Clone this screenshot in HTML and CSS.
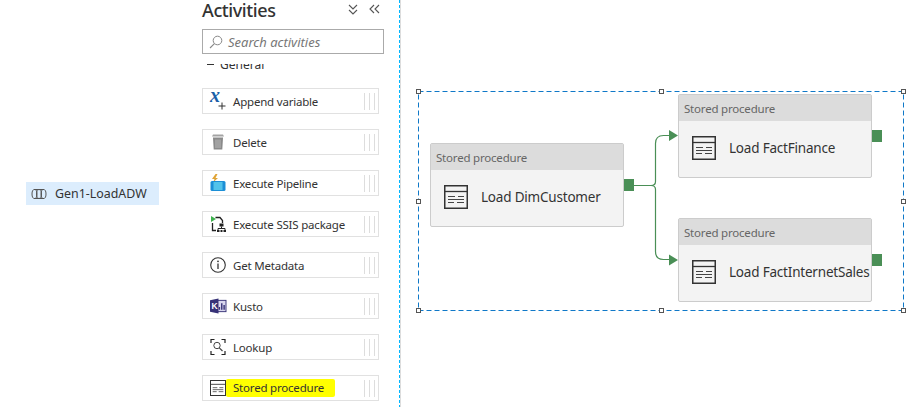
FILE: index.html
```html
<!DOCTYPE html>
<html lang="en">
<head>
    <meta charset="UTF-8">
    <title>Pipeline activities</title>
    <link rel="stylesheet" href="styles.css">
</head>
<body>
    <svg class="defs" width="0" height="0">
        <symbol id="sp" viewBox="0 0 24 24">
            <rect x="0.75" y="0.75" width="22.5" height="22.5" fill="none" stroke="#333" stroke-width="1.5"/>
            <path d="M1 6.5h22" stroke="#333" stroke-width="1.3"/>
            <path d="M4 11.500h7M14 11.500h6M4 14.500h16M4 17.500h6M13 17.500h7" stroke="#444" stroke-width="1.200"/>
        </symbol>
    </svg>

    <div class="tree">
        <div class="tree-item">
            <svg class="tree-icon" width="16" height="12" viewBox="0 0 16 12">
                <path d="M3 1.5h10M3 10.5h10" stroke="#555"/>
                <ellipse cx="3.5" cy="6" rx="2.5" ry="4.5" fill="none" stroke="#555"/>
                <ellipse cx="8" cy="6" rx="2.5" ry="4.5" fill="none" stroke="#555"/>
                <ellipse cx="12.5" cy="6" rx="2.5" ry="4.5" fill="none" stroke="#555"/>
            </svg>
            Gen1-LoadADW
        </div>
    </div>

    <div class="panel">
        <div class="panel-head">
            <h2>Activities</h2>
            <div class="panel-tools">
                <svg width="10" height="11" viewBox="0 0 10 11"><path d="M1 1l4 4 4-4M1 6l4 4 4-4" fill="none" stroke="#555" stroke-width="1.1"/></svg>
                <svg width="11" height="10" viewBox="0 0 11 10"><path d="M5 1L1 5l4 4M10 1L6 5l4 4" fill="none" stroke="#555" stroke-width="1.1"/></svg>
            </div>
        </div>
        <div class="search">
            <svg width="14" height="14" viewBox="0 0 14 14"><circle cx="8.5" cy="5.5" r="4.3" fill="none" stroke="#888"/><path d="M5.4 8.6L1 13" stroke="#888" stroke-width="1.1"/></svg>
            <span>Search activities</span>
        </div>
        <div class="list">
            <div class="group"><i></i>General</div>

            <div class="item">
                <svg width="16" height="18" viewBox="0 0 16 18">
                    <text x="0" y="10" class="x-glyph">x</text>
                    <path d="M12 10.500v7M8.500 14h7" stroke="#333"/>
                </svg>
                <span>Append variable</span>
                <b class="grip"></b>
            </div>
            <div class="item">
                <svg width="16" height="18" viewBox="0 0 16 18">
                    <path d="M3 1.500h10l1 2H2z" fill="#a3a3a3"/>
                    <path d="M3 4.500h10l-.7 12H3.700z" fill="#8a8a8a"/>
                    <path d="M6 6.500v8.500M8 6.500v8.500M10 6.500v8.500" stroke="#b8b8b8"/>
                </svg>
                <span>Delete</span>
                <b class="grip"></b>
            </div>
            <div class="item">
                <svg width="16" height="18" viewBox="0 0 16 18">
                    <path d="M5.500 0L2 5h2.500L3 8.500 8 4H5.500L7.500 0z" fill="#e0a437"/>
                    <rect x="0.500" y="7" width="15" height="10" rx="1.500" fill="#1c8fd6"/>
                    <rect x="3.500" y="8" width="9" height="8" fill="#52c3ea"/>
                </svg>
                <span>Execute Pipeline</span>
                <b class="grip"></b>
            </div>
            <div class="item">
                <svg width="16" height="18" viewBox="0 0 16 18">
                    <path d="M2.500 8v7.500H6M5.500 2.500H10l2.500 3V8" fill="none" stroke="#222" stroke-width="1.300"/>
                    <path d="M1 1l5 3-5 3z" fill="#3fb24f"/>
                    <rect x="9.500" y="8.500" width="4" height="3" fill="#222"/>
                    <path d="M11.500 11.500v2M8 15v-1.500h7V15" fill="none" stroke="#222"/>
                    <path d="M7 15h2.500v2H7zM10.500 15h2v2h-2zM13.500 15H16v2h-2.500z" fill="#222"/>
                </svg>
                <span>Execute SSIS package</span>
                <b class="grip"></b>
            </div>
            <div class="item">
                <svg width="16" height="18" viewBox="0 0 16 18">
                    <circle cx="8" cy="9" r="7.300" fill="none" stroke="#333" stroke-width="1.100"/>
                    <path d="M8 7.500V13" stroke="#333" stroke-width="1.300"/>
                    <circle cx="8" cy="5.300" r="0.900" fill="#333"/>
                </svg>
                <span>Get Metadata</span>
                <b class="grip"></b>
            </div>
            <div class="item">
                <svg width="16" height="18" viewBox="0 0 17 18">
                    <rect x="7" y="3" width="10" height="12" fill="#d9d7ee" stroke="#373277"/>
                    <path d="M10 13V10M12.500 13V6M15 13V8" stroke="#373277" stroke-width="1.500"/>
                    <path d="M0 3l9-2v16l-9-2z" fill="#373277"/>
                    <text x="1.500" y="12.500" class="k-glyph">K</text>
                </svg>
                <span>Kusto</span>
                <b class="grip"></b>
            </div>
            <div class="item">
                <svg width="16" height="18" viewBox="0 0 16 18">
                    <path d="M1 5V1.500h3.500M11.500 1.500H15V5M1 13v3.500h3.500M11.500 16.500H15V13" fill="none" stroke="#222" stroke-width="1.200"/>
                    <circle cx="7" cy="7.500" r="3.200" fill="none" stroke="#444"/>
                    <path d="M9.300 9.800l3.200 3.200" stroke="#444" stroke-width="1.200"/>
                </svg>
                <span>Lookup</span>
                <b class="grip"></b>
            </div>
            <div class="item">
                <svg width="16" height="16" viewBox="0 0 24 24"><use href="#sp"/></svg>
                <span class="marked">Stored procedure</span>
                <b class="grip"></b>
            </div>
        </div>
    </div>

    <div class="divider"></div>

    <div class="canvas">
        <svg class="links" width="509" height="411" viewBox="402 0 509 411">
            <rect x="418.500" y="91.500" width="485" height="219" fill="none" stroke="#0f78c8" stroke-dasharray="5 3"/>
            <path d="M633 185.500h18c3 0 4.500-2 4.500-4v-38c0-5 3-8 8-8h6M651 185.500c3 0 4.500 2 4.500 4v62c0 5 3 8 8 8h6" fill="none" stroke="#4a8f56" stroke-width="1.200"/>
            <path d="M669 130l9 5.500-9 5.500zM669 254.500l9 5.500-9 5.500z" fill="#4a8f56"/>
            <g fill="#fff" stroke="#555">
                <rect x="416.500" y="89.500" width="4" height="4"/>
                <rect x="659.500" y="89.500" width="4" height="4"/>
                <rect x="901.500" y="89.500" width="4" height="4"/>
                <rect x="416.500" y="199.500" width="4" height="4"/>
                <rect x="901.500" y="199.500" width="4" height="4"/>
                <rect x="416.500" y="308.500" width="4" height="4"/>
                <rect x="659.500" y="308.500" width="4" height="4"/>
                <rect x="901.500" y="308.500" width="4" height="4"/>
            </g>
        </svg>

        <div class="node node-dim">
            <div class="node-head">Stored procedure</div>
            <div class="node-body">
                <svg width="24" height="24"><use href="#sp"/></svg>
                <span>Load DimCustomer</span>
            </div>
            <b class="port"></b>
        </div>
        <div class="node node-finance">
            <div class="node-head">Stored procedure</div>
            <div class="node-body">
                <svg width="24" height="24"><use href="#sp"/></svg>
                <span>Load FactFinance</span>
            </div>
            <b class="port"></b>
        </div>
        <div class="node node-sales">
            <div class="node-head">Stored procedure</div>
            <div class="node-body">
                <svg width="24" height="24"><use href="#sp"/></svg>
                <span>Load FactInternetSales</span>
            </div>
            <b class="port"></b>
        </div>
    </div>
</body>
</html>
```

FILE: styles.css
```css
html, body {
    height: 100%;
}
body {
    margin: 0;
    display: flex;
    overflow: hidden;
    background: #fff;
    font-family: "Noto Sans", Arial, sans-serif;
    color: #333;
}
.defs {
    position: absolute;
}

.tree {
    width: 202px;
    flex: none;
    padding: 182px 43px 0 26px;
    box-sizing: border-box;
}
.tree-item {
    height: 23px;
    background: #dcedfd;
    display: flex;
    align-items: center;
    gap: 8px;
    padding-left: 5px;
    font-size: 12.4px;
    color: #333;
}
.tree-icon {
    flex: none;
}

.panel {
    width: 182px;
    flex: none;
}
.panel-head {
    height: 29px;
    display: flex;
    justify-content: space-between;
}
.panel-head h2 {
    margin: 0;
    font-size: 18px;
    line-height: 20px;
    font-weight: 500;
    letter-spacing: -0.4px;
    color: #333;
}
.panel-tools {
    display: flex;
    gap: 11px;
    padding: 4px 4px 0 0;
    align-items: flex-start;
}
.search {
    height: 25px;
    box-sizing: border-box;
    border: 1px solid #aaa;
    display: flex;
    align-items: center;
    gap: 5px;
    padding: 1px 0 0 6px;
    font-size: 13px;
    font-style: italic;
    color: #777;
}
.list {
    width: 177px;
    height: 340px;
    margin-top: 10px;
    overflow: hidden;
}
.group {
    display: flex;
    align-items: center;
    gap: 6px;
    height: 16px;
    margin-top: -8px;
    padding-left: 5px;
    font-size: 12px;
}
.group i {
    width: 7px;
    height: 1px;
    background: #333;
}
.item {
    height: 26px;
    box-sizing: border-box;
    margin-top: 15px;
    border: 1px solid #e1e1e1;
    display: flex;
    align-items: center;
    padding-left: 7px;
    font-size: 11.5px;
    letter-spacing: -0.2px;
    color: #333;
}
.group + .item {
    margin-top: 16px;
}
.item svg {
    flex: none;
    margin-right: 7px;
    overflow: visible;
}
.item .marked {
    background: #ffff00;
    margin-left: -7px;
    padding: 0 11px 0 7px;
    line-height: 18px;
    border-radius: 2px;
}
.grip {
    margin-left: auto;
    margin-right: 3px;
    width: 11px;
    height: 17px;
    background: repeating-linear-gradient(90deg, #ddd 0, #ddd 1px, transparent 1px, transparent 5px);
}
.x-glyph {
    font-family: "Liberation Serif", serif;
    font-style: italic;
    font-weight: 700;
    font-size: 20px;
    fill: #1a5fa8;
}
.k-glyph {
    font-family: "Liberation Sans", sans-serif;
    font-weight: 700;
    font-size: 9px;
    fill: #fff;
}

.divider {
    width: 2px;
    flex: none;
    margin: 0 1px 0 15px;
    height: 407px;
    background:
        linear-gradient(90deg, transparent 1px, #ddd 1px),
        repeating-linear-gradient(180deg, #00b7ff 0, #00b7ff 3px, #fff 3px, #fff 5px);
}

.canvas {
    position: relative;
    flex: 1;
}
.links {
    position: absolute;
    left: 0;
    top: 0;
}
.node {
    position: absolute;
    width: 194px;
    height: 84px;
    box-sizing: border-box;
    border: 1px solid #ccc;
    border-radius: 2px;
    background: #f3f3f3;
}
.node-dim {
    left: 28px;
    top: 143px;
}
.node-finance {
    left: 276px;
    top: 94px;
}
.node-sales {
    left: 276px;
    top: 218px;
}
.node-head {
    height: 26px;
    background: #dcdcdc;
    display: flex;
    align-items: center;
    padding-left: 5px;
    font-size: 11.5px;
    letter-spacing: -0.2px;
    color: #666;
}
.node-body {
    display: flex;
    align-items: center;
    gap: 13px;
    height: 54px;
    padding-left: 13px;
    font-size: 13.5px;
    letter-spacing: -0.2px;
    white-space: nowrap;
    color: #333;
}
.port {
    position: absolute;
    left: 193px;
    top: 35px;
    width: 10px;
    height: 12px;
    background: #4a8f56;
}
```
